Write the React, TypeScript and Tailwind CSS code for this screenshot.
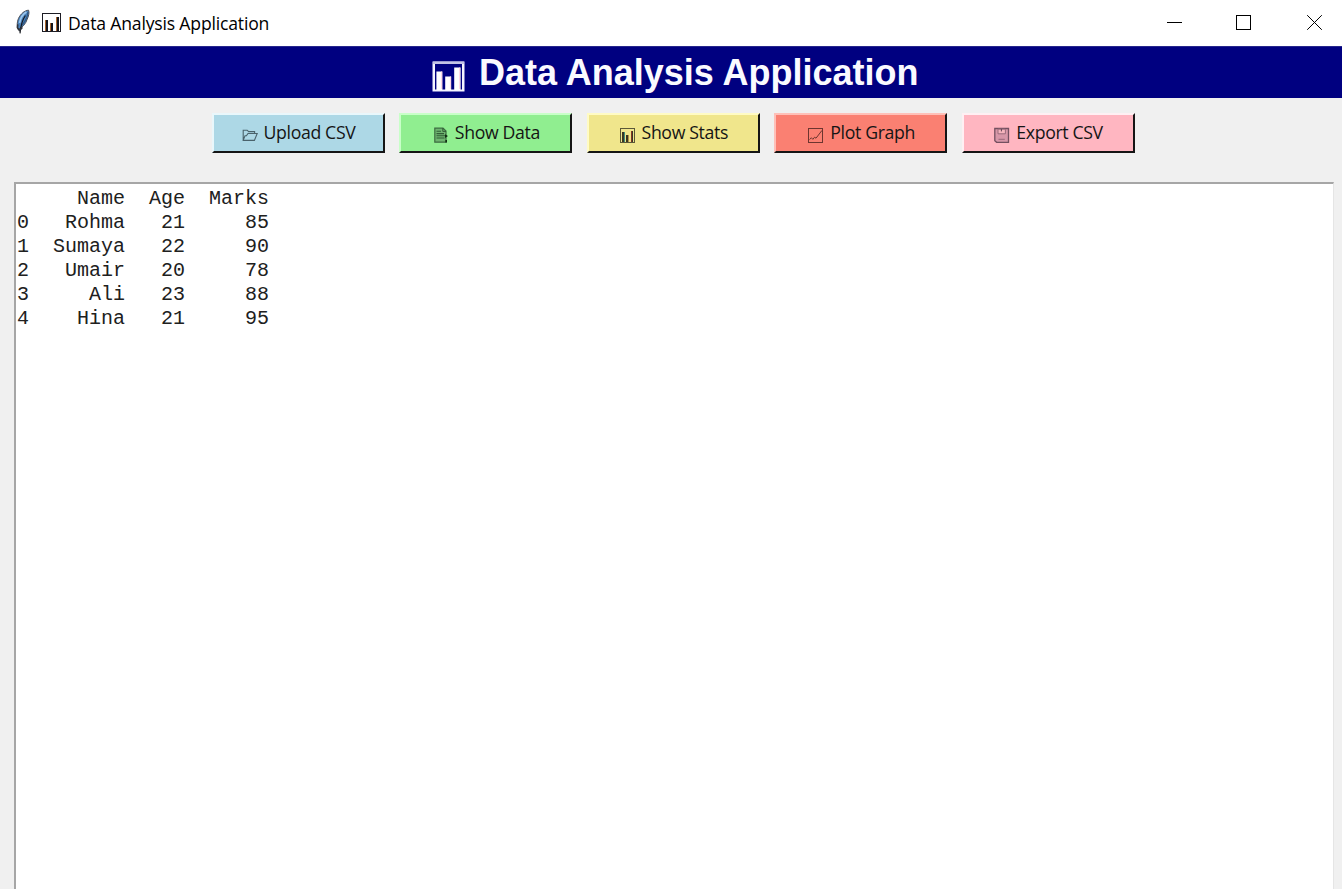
import React from "react";

type IconProps = { className?: string };

function FeatherIcon({ className }: IconProps) {
  return (
    <svg className={className} viewBox="0 0 16 26" fill="none">
      <path d="M13.6 1.2C9.6 1.4 5.6 4.8 3.4 9.6C2 13 1.8 16.6 3 20.4C7.2 18.8 10.8 14.8 12.2 10.2C13.4 7.4 14.6 4 13.6 1.2Z" fill="#4a83bd" stroke="#4a4f58" strokeWidth="1" />
      <path d="M11.4 3C8 5 5.4 9 4.6 14" stroke="#9cc6ec" strokeWidth="1.8" />
      <path d="M13 3C12.6 7 10.4 12.6 6.4 16.8" stroke="#2f5884" strokeWidth="1.3" />
      <path d="M10.4 6.5C7.6 10.5 5.8 15 5 24.4" stroke="#16191f" strokeWidth="1.2" />
      <path d="M2.8 15.4L2.4 18.6L4.4 21.4L7.4 18.4" stroke="#30343c" strokeWidth="1.6" />
    </svg>
  );
}

function TitleChartIcon({ className }: IconProps) {
  return (
    <svg className={className} viewBox="0 0 20 20" fill="none" shapeRendering="crispEdges">
      <rect x="0.5" y="0.5" width="18" height="18" stroke="#1c1c24" />
      <path d="M3 7H6V18H3ZM8 10H11V18H8ZM14 4H17V18H14Z" fill="#14141c" />
      <path d="M3.5 7V18M8.5 10V18M14.5 4V18" stroke="#a8642c" />
    </svg>
  );
}

function HeaderChartIcon({ className }: IconProps) {
  return (
    <svg className={className} viewBox="0 0 33 31" fill="none">
      <path d="M0.5 0.5H32.5V30.5H0.5ZM3 3V28.5H30V3Z" fill="#f4f4ff" fillRule="evenodd" />
      <path d="M1 1.8H32" stroke="#c3c3e6" strokeWidth="2.4" />
      <path d="M4.4 10.5H10.4V29H4.4ZM13.2 15.5H19.2V29H13.2ZM22.2 6.5H28.6V29H22.2Z" fill="#fff" />
      <path d="M9.6 10.5V28M18.4 15.5V28M27.6 6.5V28" stroke="#ffd5e4" />
    </svg>
  );
}

function FolderIcon({ className }: IconProps) {
  return (
    <svg className={className} viewBox="0 0 16 16" fill="none" stroke="#4a626b" strokeWidth="1.1">
      <path d="M1.2 13V3.2H5.2L6.6 4.6H12.6V6.4M1.2 13.4H12.4L15.2 6.5H6L4.4 8.8H3L1.2 13.4Z" />
    </svg>
  );
}

function PageIcon({ className }: IconProps) {
  return (
    <svg className={className} viewBox="0 0 16 16" fill="none">
      <path d="M1.8 1.2H10L13 4V15.2H1.8Z" fill="#6fb470" stroke="#3c6c40" strokeWidth="1.2" />
      <path d="M9.8 1.2V4.4H13" stroke="#315c35" />
      <path d="M3.5 4.3H8M3.5 6.6H11M3.5 8.8H13M3.5 11H11.5" stroke="#315c35" strokeWidth="1.1" />
      <path d="M12 7.2L15 9L12 10.9ZM12.4 13H14V15.4H12.4Z" fill="#102c12" />
    </svg>
  );
}

function BarsIcon({ className }: IconProps) {
  return (
    <svg className={className} viewBox="0 0 16 16" fill="none" shapeRendering="crispEdges">
      <rect x="0.5" y="1.5" width="14" height="14" stroke="#5b5838" />
      <path d="M2 5H4V15H2ZM6 8H8V15H6ZM11 4H13V15H11Z" fill="#393724" />
      <path d="M4.5 5V15" stroke="#3c9180" />
      <path d="M8.5 8V15" stroke="#b39348" />
      <path d="M11.5 4V15" stroke="#873622" />
    </svg>
  );
}

function LineIcon({ className }: IconProps) {
  return (
    <svg className={className} viewBox="0 0 16 16" fill="none" stroke="#6d352f">
      <rect x="0.5" y="1.5" width="14" height="14" />
      <path d="M1.5 12.5L3.4 10.8L4.8 12.3L6.6 10.2L8 11.2L14 3.4" />
    </svg>
  );
}

function DiskIcon({ className }: IconProps) {
  return (
    <svg className={className} viewBox="0 0 16 16" fill="none" stroke="#735060">
      <path d="M0.8 1.5H14.5V15.3H2.6L0.8 13.6Z" fill="#d797a8" strokeWidth="1.3" />
      <path d="M4 2.2H11.4V6.8H4Z" fill="#f5b4bd" stroke="#9a6a7b" />
      <path d="M7.4 2V4.4" stroke="#5d4452" />
      <path d="M4.5 12.3H10.8" stroke="#9a6a7b" />
    </svg>
  );
}

const actions = [
  { label: "Upload CSV", Icon: FolderIcon, color: "bg-[#add8e6] border-t-[#e9f7fb] border-l-[#e9f7fb]", inset: "pl-0" },
  { label: "Show Data", Icon: PageIcon, color: "bg-[#90ee90] border-t-[#c8ffc8] border-l-[#c8ffc8]", inset: "pl-px" },
  { label: "Show Stats", Icon: BarsIcon, color: "bg-[#f0e68c] border-t-[#fffbc4] border-l-[#fffbc4]", inset: "pl-px" },
  { label: "Plot Graph", Icon: LineIcon, color: "bg-[#fa8072] border-t-[#ffc0b8] border-l-[#ffc0b8]", inset: "pl-[2px]" },
  { label: "Export CSV", Icon: DiskIcon, color: "bg-[#ffb6c1] border-t-[#fff0f3] border-l-[#fff0f3]", inset: "pl-px" },
];

const rows = [
  "     Name  Age  Marks",
  "0   Rohma   21     85",
  "1  Sumaya   22     90",
  "2   Umair   20     78",
  "3     Ali   23     88",
  "4    Hina   21     95",
];

export default function App() {
  return (
    <div className="flex h-[889px] w-[1342px] flex-col overflow-hidden bg-[#f0f0f0] text-black">
      <div className="flex h-[46px] shrink-0 items-start bg-white">
        <FeatherIcon className="mt-[9px] ml-[15px] h-[26px] w-4" />
        <TitleChartIcon className="mt-[13px] ml-[11px] h-5 w-5" />
        <span className="mt-[11px] ml-[6px] font-['Open_Sans',sans-serif] text-[17.6px] leading-6 tracking-[-0.18px] whitespace-nowrap">
          Data Analysis Application
        </span>
        <div className="mt-[15px] mr-[19px] ml-auto flex">
          <svg className="h-4 w-4" viewBox="0 0 16 16" fill="none" stroke="#000" shapeRendering="crispEdges">
            <path d="M0 7.5H15" />
          </svg>
          <svg className="ml-[53px] h-4 w-4" viewBox="0 0 16 16" fill="none" stroke="#000" shapeRendering="crispEdges">
            <rect x="0.5" y="0.5" width="14" height="14" />
          </svg>
          <svg className="ml-[55px] h-4 w-4" viewBox="0 0 16 16" fill="none" stroke="#000">
            <path d="M0.2 0.2L14.8 14.8M14.8 0.2L0.2 14.8" />
          </svg>
        </div>
      </div>

      <header className="flex h-[52px] shrink-0 items-start border-t border-[#26268c] bg-[#000080] pl-[432px]">
        <HeaderChartIcon className="mt-[14px] h-[31px] w-[33px]" />
        <h1 className="mt-[6px] ml-[14px] font-['Liberation_Sans',sans-serif] text-[36px] leading-10 font-bold whitespace-nowrap text-[#fafaff]">
          Data Analysis Application
        </h1>
      </header>

      <div className="mt-[15px] flex h-10 shrink-0 gap-[14.4px] pl-[212px]">
        {actions.map(({ label, Icon, color, inset }) => (
          <button
            key={label}
            className={`flex h-[39.5px] w-[173px] items-start justify-center border-2 border-r-[#151515] border-b-[#151515] ${inset} ${color}`}
          >
            <Icon className="mt-[12px] h-4 w-4 shrink-0" />
            <span className="mt-[5px] ml-[6px] font-['Open_Sans',sans-serif] text-[17.7px] leading-6 tracking-[-0.36px] whitespace-nowrap text-[#151515]">
              {label}
            </span>
          </button>
        ))}
      </div>

      <main className="mt-[29px] mr-[8px] ml-[14px] grow border-t-2 border-r border-l-2 border-t-[#a6a6a6] border-r-[#e5e5e5] border-l-[#a6a6a6] bg-white pt-[3px] pl-px">
        <pre className="font-['Liberation_Mono',monospace] text-[20px] leading-6 text-[#202020]">{rows.join("\n")}</pre>
      </main>
    </div>
  );
}
